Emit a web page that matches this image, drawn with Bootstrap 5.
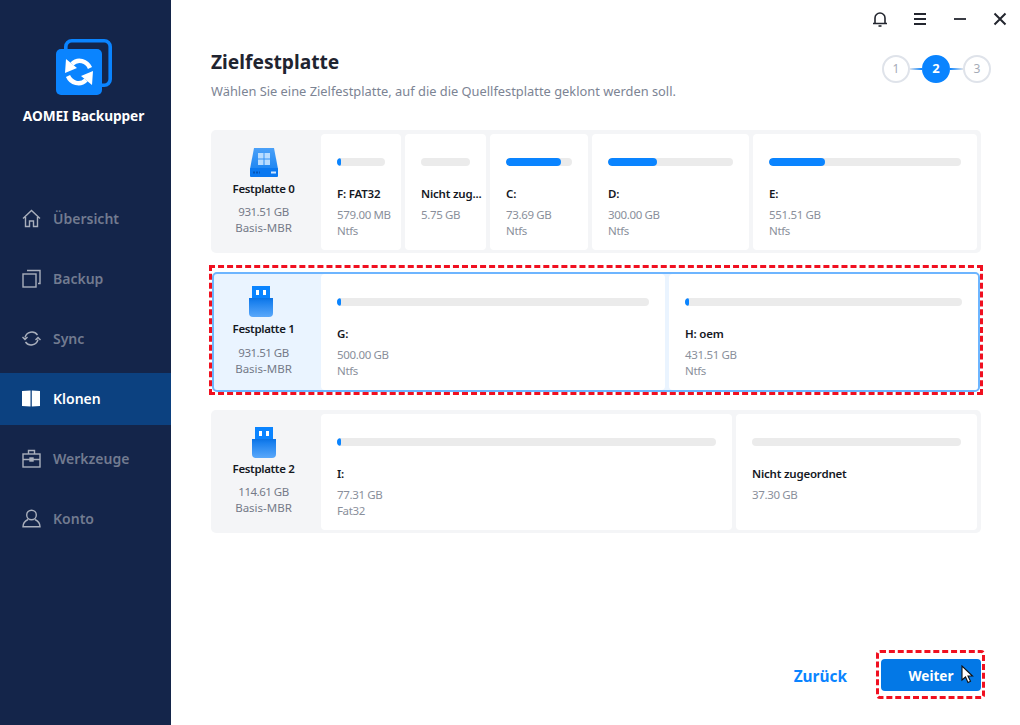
<!DOCTYPE html>
<html lang="de">
<head>
<meta charset="utf-8">
<link href="https://cdn.jsdelivr.net/npm/bootstrap@5.3.0/dist/css/bootstrap.min.css" rel="stylesheet">
<style>
html,body{height:725px;overflow:hidden;background:#fff}
body{font-family:"Noto Sans","Open Sans",sans-serif;color:#1b1f2a}
.shell{width:1020px;height:725px}
.side{width:171px;background:#14254a;flex:none}
.logo-wrap{padding-top:39px;height:193px}
.logo-mark{display:block;margin-left:56px}
.logo-name{font-size:13.7px;font-weight:700;color:#fff;margin-top:12px;line-height:18px;letter-spacing:-.1px;padding-right:4px}
.side-item{height:52px;margin-bottom:8px;padding-left:22px;padding-bottom:2px;gap:12px;color:#727b90;font-size:14px;font-weight:600}
.side-item svg{flex:none}
.side-item.on{background:#0c4180;color:#fff}
.pane{padding:0 39px 0 40px;position:relative}
.winbar{height:38px;margin-right:-39px;padding-right:11px;gap:22px}
.winbar svg{display:block}
.head-row{height:92px}
.ttl{font-size:19.2px;font-weight:700;line-height:26px;margin:11px 0 7px;color:#1f2430}
.sub{font-size:12.85px;color:#7c8494;line-height:18px}
.stepper{margin-right:-10px;margin-top:17px;height:28px}
.step{width:28px;height:28px;border-radius:50%;border:2px solid #dfe3ea;font-size:12px;color:#a5abb7;background:#fff}
.step.cur{background:#0a84ff;border-color:#0a84ff;color:#fff;font-weight:700;font-size:13px}
.link{height:2px;width:13px;background:#0a84ff}
.link.a{background:linear-gradient(90deg,#dfe3ea,#0a84ff);width:12px}
.link.b{background:linear-gradient(90deg,#0a84ff,#dfe3ea)}
.disk{background:#f4f5f7;border-radius:5px;height:123px;padding:4px 4px 3px 0}
.disk-info{width:110px;flex:none;text-align:center;font-size:11.5px;line-height:16px;color:#747a88;padding-right:5px}
.disk-info b{display:block;color:#15181f;font-weight:600;font-size:11.5px;letter-spacing:-.35px;line-height:18px;margin:3px 0 6px}
.disk-info svg{display:block;margin:0 auto}
.disk-info .cap{letter-spacing:-.5px}
.icon-hdd{margin-top:14px!important}
.icon-usb-a{margin-top:13px!important}
.icon-usb-a + b{margin-top:2px}
.icon-usb-b{margin-top:12px!important;position:relative;left:-3px}
.parts{gap:4px;min-width:0}
.part{background:#fff;border-radius:4px;padding:24px 16px 0;min-width:0}
.w80{flex:0 0 80px}.w81{flex:0 0 81px}.w98{flex:0 0 98px}.w157{flex:0 0 157px}.wfill{flex:1 1 0}
.w411{flex:0 0 411px}.w344{flex:0 0 344px}
.meter{height:8px;border-radius:4px;background:#ebebeb;overflow:hidden}
.meter i{display:block;height:100%;background:#0a84ff;border-radius:4px;min-width:4px}
.pname{font-size:11.5px;font-weight:600;color:#15181f;letter-spacing:-.2px;line-height:16px;margin-top:20px;white-space:nowrap}
.pmeta{font-size:11.5px;line-height:16px;color:#8a8f9b;margin-top:5px;letter-spacing:-.35px}
.pmeta span{display:block;white-space:nowrap}
.pick{border:3px dashed #f01020;margin:12px -2px 15px -2px;padding:4px 0 0 0;height:130px}
.pick .disk{background:#eaf4ff;border:2px solid #6db5ff;border-radius:5px;height:120px;padding:0}
.pick .disk-info{width:107px;padding-right:8px}
.pick .disk-info b{margin:3px 0 7px}
.pick .parts{gap:4px}
.foot{position:absolute;right:35px;bottom:26px;gap:29px}
.back{font-size:15.4px;font-weight:700;color:#0a84ff;margin-top:4px}
.go-wrap{border:3px dashed #f01020;border-radius:4px;padding:6px 1px 0 2px;width:109px;height:49px}
.go-btn{width:100px;height:32px;background:#0378e6;border:0;border-radius:4px;color:#fff;font-weight:700;font-size:13.5px;padding:2px 0 0}
.cursor{position:absolute;right:8px;top:12px}
</style>
</head>
<body>
<div class="shell d-flex">
  <aside class="side d-flex flex-column">
    <div class="logo-wrap text-center">
      <svg class="logo-mark" width="56" height="56" viewBox="0 0 56 56">
        <rect x="9.800" y="1.800" width="44.400" height="44.400" rx="6" fill="none" stroke="#0a84ff" stroke-width="3.600"/>
        <rect x="0" y="10" width="46" height="46" rx="5" fill="#0a84ff"/>
        <path d="M34 29C31 22 22 19 16 25M12 37C15 44 24 47 30 41" fill="none" stroke="#fff" stroke-width="4.500"/>
        <path d="M9 34L21 29L10 20zM37 32L25 37L36 46z" fill="#fff"/>
      </svg>
      <div class="logo-name">AOMEI Backupper</div>
    </div>
    <div class="side-item d-flex align-items-center">
      <svg width="19" height="19" viewBox="0 0 19 19" fill="none" stroke="#a9afbc" stroke-width="1.400"><path d="M1 9.500L9.500 1.500 18 9.500M3.500 8v9.500h4v-5.500h4v5.500h4V8"/></svg>
      <span>Übersicht</span>
    </div>
    <div class="side-item d-flex align-items-center">
      <svg width="19" height="19" viewBox="0 0 19 19" fill="none" stroke="#a9afbc" stroke-width="1.400"><rect x="1" y="5" width="13" height="13"/><path d="M5 1.500h13v13h-2"/></svg>
      <span>Backup</span>
    </div>
    <div class="side-item d-flex align-items-center">
      <svg width="19" height="19" viewBox="0 0 19 19" fill="none" stroke="#a9afbc" stroke-width="1.400"><path d="M3 8.500A7 7 0 0 1 15.500 6M16 10.500A7 7 0 0 1 3.500 13"/><path d="M0.500 8l2.500 2.500 2.500-2.500M13.500 11l2.500-2.500 2.500 2.500"/></svg>
      <span>Sync</span>
    </div>
    <div class="side-item on d-flex align-items-center">
      <svg width="19" height="17" viewBox="0 0 19 17" fill="#fff"><path d="M0 1L8.500 0.500V16.500L0 16z"/><path d="M9.800 0.500L18 1V16L9.800 16.500z"/></svg>
      <span>Klonen</span>
    </div>
    <div class="side-item d-flex align-items-center">
      <svg width="19" height="19" viewBox="0 0 19 19" fill="none" stroke="#a9afbc" stroke-width="1.400"><rect x="1" y="5" width="17" height="13"/><path d="M6.500 5V1.500h6V5M1 10.500h17"/><rect x="8" y="9" width="3" height="3" fill="#a9afbc"/></svg>
      <span>Werkzeuge</span>
    </div>
    <div class="side-item d-flex align-items-center">
      <svg width="19" height="19" viewBox="0 0 19 19" fill="none" stroke="#a9afbc" stroke-width="1.400"><circle cx="9.500" cy="6" r="4.800"/><path d="M6 10.500C2 12.500 1 15 1 17.800h17C18 15 17 12.500 13 10.500"/></svg>
      <span>Konto</span>
    </div>
  </aside>

  <main class="pane flex-grow-1 d-flex flex-column">
    <div class="winbar d-flex justify-content-end align-items-center">
      <svg width="18" height="18" viewBox="0 0 18 18" fill="none" stroke="#23262f" stroke-width="1.600"><path d="M2 13.500h14M4 13.500V8a5 5 0 0 1 10 0v5.500"/><path d="M7.500 16h3"/></svg>
      <svg width="18" height="18" viewBox="0 0 18 18" stroke="#23262f" stroke-width="1.800"><path d="M3 4h12M3 9h12M3 14h12"/></svg>
      <svg width="18" height="18" viewBox="0 0 18 18" stroke="#23262f" stroke-width="1.800"><path d="M3 9h12"/></svg>
      <svg width="18" height="18" viewBox="0 0 18 18" stroke="#23262f" stroke-width="2"><path d="M3.500 3.500l11 11M14.500 3.500l-11 11"/></svg>
    </div>
    <div class="head-row d-flex justify-content-between">
      <div>
        <div class="ttl">Zielfestplatte</div>
        <div class="sub">Wählen Sie eine Zielfestplatte, auf die die Quellfestplatte geklont werden soll.</div>
      </div>
      <div class="stepper d-flex align-items-center">
        <div class="step d-flex align-items-center justify-content-center">1</div>
        <div class="link a"></div>
        <div class="step cur d-flex align-items-center justify-content-center">2</div>
        <div class="link b"></div>
        <div class="step d-flex align-items-center justify-content-center">3</div>
      </div>
    </div>

    <svg width="0" height="0" class="position-absolute">
      <defs>
        <linearGradient id="usbBody" x1="0" y1="0" x2="0" y2="1"><stop offset="0" stop-color="#0a72e4"/><stop offset=".2" stop-color="#1a80ee"/><stop offset="1" stop-color="#5aa8fa"/></linearGradient>
        <linearGradient id="hddTop" x1="0" y1="0" x2="0" y2="1"><stop offset="0" stop-color="#4aa0f8"/><stop offset="1" stop-color="#1e86f2"/></linearGradient>
      </defs>
    </svg>

    <section class="disk d-flex">
      <div class="disk-info">
        <svg width="28" height="29" viewBox="0 0 28 29" class="icon-hdd"><path d="M4 0h20l4 21H0z" fill="url(#hddTop)"/><rect x="0" y="20" width="28" height="9" rx="1" fill="#0a78f0"/><path d="M8 5h5.500v5.500H8zM14.500 5H20v5.500h-5.500zM8 11.500h5.500V17H8zM14.500 11.500H20V17h-5.500z" fill="#b8dcff"/><rect x="21" y="23.500" width="5" height="2" fill="#cfe6ff"/><path d="M3 24.500h7" stroke="#0355b8" stroke-width="2" stroke-dasharray="2 1"/></svg>
        <b>Festplatte 0</b>
        <span class="cap">931.51 GB</span><br>Basis-MBR
      </div>
      <div class="parts d-flex flex-grow-1">
        <div class="part w80"><div class="meter"><i style="width:5%"></i></div><div class="pname">F: FAT32</div><div class="pmeta"><span>579.00 MB</span><span>Ntfs</span></div></div>
        <div class="part w81"><div class="meter"></div><div class="pname">Nicht zug...</div><div class="pmeta"><span>5.75 GB</span></div></div>
        <div class="part w98"><div class="meter"><i style="width:84%"></i></div><div class="pname">C:</div><div class="pmeta"><span>73.69 GB</span><span>Ntfs</span></div></div>
        <div class="part w157"><div class="meter"><i style="width:39%"></i></div><div class="pname">D:</div><div class="pmeta"><span>300.00 GB</span><span>Ntfs</span></div></div>
        <div class="part wfill"><div class="meter"><i style="width:29%"></i></div><div class="pname">E:</div><div class="pmeta"><span>551.51 GB</span><span>Ntfs</span></div></div>
      </div>
    </section>

    <div class="pick">
      <section class="disk d-flex">
        <div class="disk-info">
          <svg width="24" height="31" viewBox="0 0 24 31" class="icon-usb-b"><path d="M3 0h18v12H3z" fill="#0a84ff"/><rect x="7" y="4" width="3" height="5" fill="#fff"/><rect x="14" y="4" width="3" height="5" fill="#fff"/><path d="M0 12h24v15a4 4 0 0 1-4 4H4a4 4 0 0 1-4-4z" fill="url(#usbBody)"/></svg>
          <b>Festplatte 1</b>
          <span class="cap">931.51 GB</span><br>Basis-MBR
        </div>
        <div class="parts d-flex flex-grow-1">
          <div class="part w344"><div class="meter"><i style="width:1%"></i></div><div class="pname">G:</div><div class="pmeta"><span>500.00 GB</span><span>Ntfs</span></div></div>
          <div class="part wfill"><div class="meter"><i style="width:1%"></i></div><div class="pname">H: oem</div><div class="pmeta"><span>431.51 GB</span><span>Ntfs</span></div></div>
        </div>
      </section>
    </div>

    <section class="disk d-flex">
      <div class="disk-info">
        <svg width="24" height="31" viewBox="0 0 24 31" class="icon-usb-a"><path d="M3 0h18v12H3z" fill="#0a84ff"/><rect x="7" y="4" width="3" height="5" fill="#fff"/><rect x="14" y="4" width="3" height="5" fill="#fff"/><path d="M0 12h24v15a4 4 0 0 1-4 4H4a4 4 0 0 1-4-4z" fill="url(#usbBody)"/></svg>
        <b>Festplatte 2</b>
        <span class="cap">114.61 GB</span><br>Basis-MBR
      </div>
      <div class="parts d-flex flex-grow-1">
        <div class="part w411"><div class="meter"><i style="width:1%"></i></div><div class="pname">I:</div><div class="pmeta"><span>77.31 GB</span><span>Fat32</span></div></div>
        <div class="part wfill"><div class="meter"></div><div class="pname">Nicht zugeordnet</div><div class="pmeta"><span>37.30 GB</span></div></div>
      </div>
    </section>

    <div class="foot d-flex align-items-center">
      <span class="back">Zurück</span>
      <div class="go-wrap position-relative">
        <button class="go-btn d-block" type="button">Weiter</button>
        <svg class="cursor" width="13" height="19" viewBox="0 0 13 19"><path d="M1 1v14l3.500-3 2.500 5.500 2.500-1.200-2.500-5.300h4.500z" fill="#fff" stroke="#111" stroke-width="1.100"/></svg>
      </div>
    </div>
  </main>
</div>
</body>
</html>
